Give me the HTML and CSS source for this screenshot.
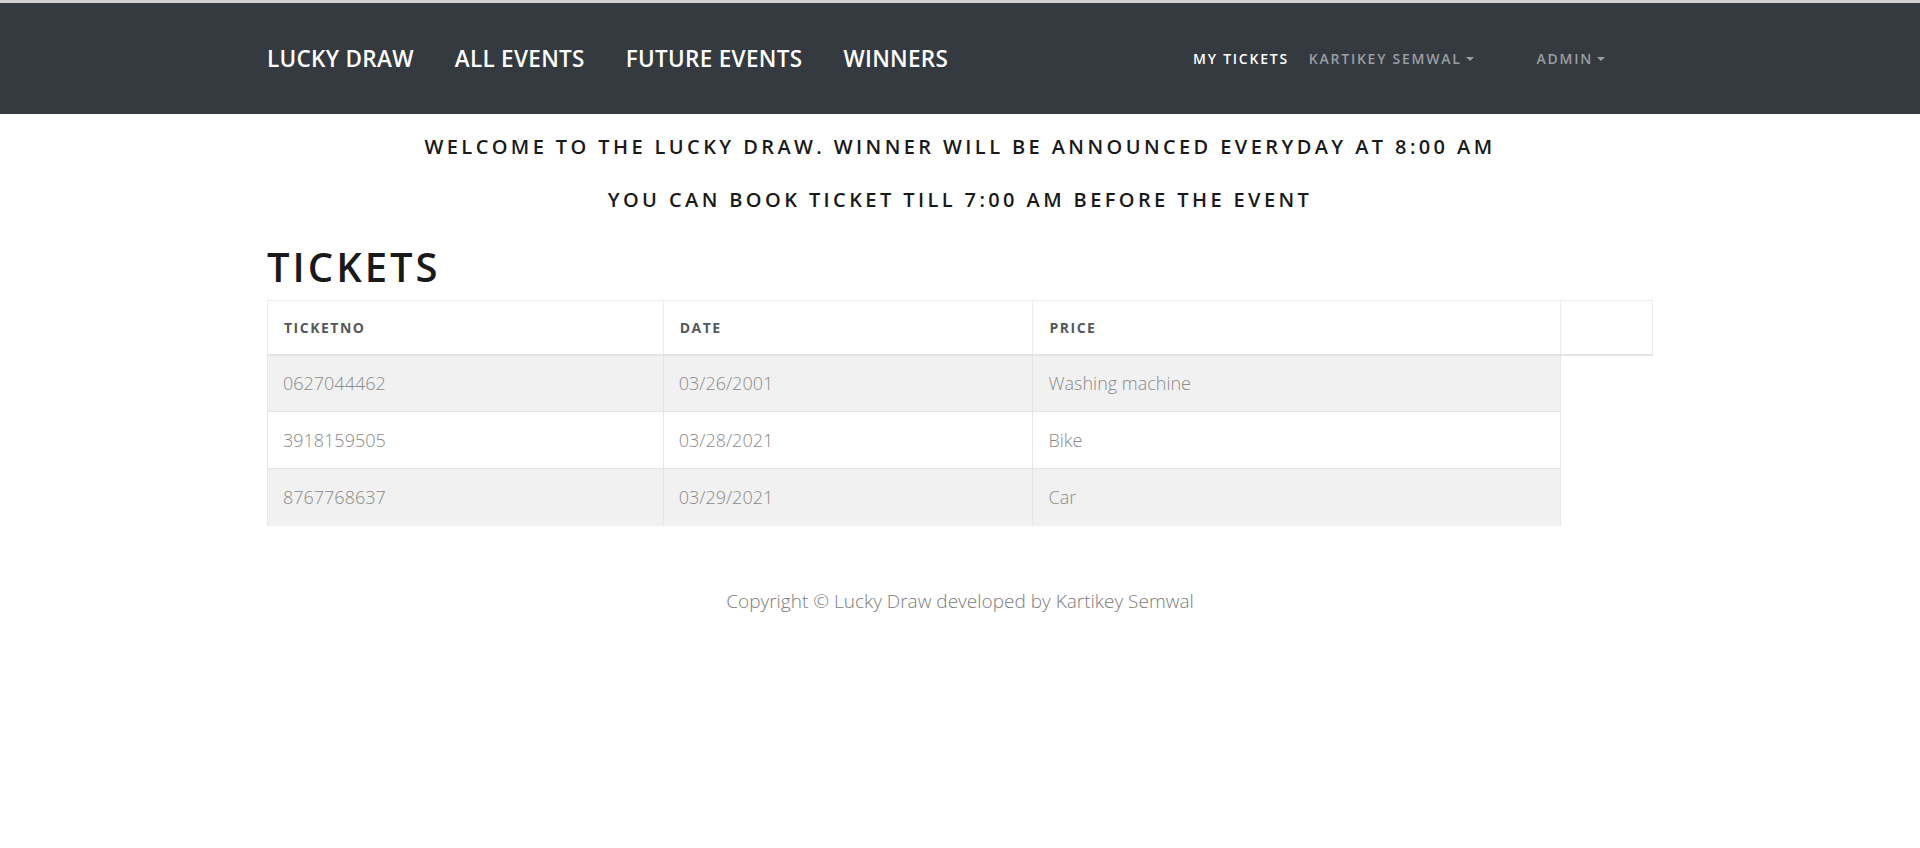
FILE: index.html
```html
<!DOCTYPE html>
<html>
<head>
<meta charset="utf-8">
<link rel="stylesheet" href="styles.css">
</head>
<body>
<div class="topline"></div>
<nav class="navbar">
  <div class="nav-inner">
    <ul class="nav-main">
      <li><a href="#">Lucky Draw</a></li>
      <li><a href="#">All Events</a></li>
      <li><a href="#">Future Events</a></li>
      <li><a href="#">Winners</a></li>
    </ul>
    <ul class="nav-right">
      <li class="active"><a href="#">My Tickets</a></li>
      <li class="user"><a href="#">Kartikey Semwal<span class="caret"></span></a></li>
      <li class="admin"><a href="#">Admin<span class="caret"></span></a></li>
    </ul>
  </div>
</nav>
<main class="container">
  <h5 class="notice first">Welcome to the lucky draw. Winner will be announced everyday at 8:00 AM</h5>
  <h5 class="notice">You can book ticket till 7:00 AM before the event</h5>
  <h1 class="title">Tickets</h1>
  <table class="tickets">
    <thead>
      <tr>
        <th class="c1">TicketNo</th>
        <th class="c2">Date</th>
        <th class="c3">Price</th>
        <th class="c4"></th>
      </tr>
    </thead>
    <tbody>
      <tr><td>0627044462</td><td>03/26/2001</td><td>Washing machine</td></tr>
      <tr><td>3918159505</td><td>03/28/2021</td><td>Bike</td></tr>
      <tr><td>8767768637</td><td>03/29/2021</td><td>Car</td></tr>
    </tbody>
  </table>
  <footer class="footer">Copyright © Lucky Draw developed by Kartikey Semwal</footer>
</main>
</body>
</html>
```
FILE: styles.css
```css
html, body {
  margin: 0;
  padding: 0;
  background: #fff;
}
body {
  font-family: "Open Sans", "Noto Sans", sans-serif;
  color: #1a1a1a;
}
.topline {
  height: 3px;
  background: #d3d3d3;
}
.navbar {
  background: #343a40;
  height: 111px;
  display: flex;
  align-items: center;
}
.nav-inner {
  width: 1386px;
  margin: 0 auto;
  display: flex;
  align-items: center;
  padding-right: 48px;
  box-sizing: border-box;
}
.nav-main, .nav-right {
  list-style: none;
  margin: 0;
  padding: 0;
  display: flex;
  align-items: center;
}
.nav-main {
  gap: 41px;
}
.nav-main a {
  color: #fff;
  text-decoration: none;
  text-transform: uppercase;
  font-weight: 600;
  font-size: 22.5px;
  letter-spacing: 0.3px;
}
.nav-right {
  margin-left: auto;
}
.nav-right a {
  color: #9a9ea2;
  text-decoration: none;
  text-transform: uppercase;
  font-weight: 600;
  font-size: 14px;
  letter-spacing: 1.75px;
  display: flex;
  align-items: center;
}
.nav-right .active a {
  color: #fff;
}
.nav-right .user {
  margin-left: 20px;
}
.nav-right .admin {
  margin-left: 63px;
}
.caret {
  display: inline-block;
  width: 0;
  height: 0;
  margin-left: 4px;
  border-left: 4.5px solid transparent;
  border-right: 4.5px solid transparent;
  border-top: 4.5px solid #9a9ea2;
}
.container {
  width: 1386px;
  margin: 0 auto;
}
.notice {
  margin: 0;
  text-align: center;
  text-transform: uppercase;
  font-weight: 600;
  font-size: 20px;
  line-height: 24px;
  letter-spacing: 3.4px;
  color: #1a1a1a;
}
.notice.first {
  margin-top: 21px;
  margin-bottom: 29px;
}
.title {
  margin: 30px 0 8px;
  font-size: 40px;
  line-height: 50px;
  font-weight: 600;
  text-transform: uppercase;
  letter-spacing: 3px;
  color: #1a1a1a;
}
.tickets {
  width: 100%;
  border-collapse: collapse;
  font-size: 16px;
}
.tickets th {
  text-align: left;
  text-transform: uppercase;
  font-size: 14px;
  font-weight: 700;
  letter-spacing: 1.5px;
  color: #55595c;
  height: 54px;
  padding: 0 16px;
  border: 1px solid #ececec;
  border-bottom: 2px solid #e4e4e4;
  box-sizing: border-box;
}
.tickets .c1 { width: 396px; }
.tickets .c2 { width: 370px; }
.tickets .c3 { width: 528px; }
.tickets .c4 { width: 92px; }
.tickets td {
  height: 57px;
  padding: 0 15px;
  color: #8a8a8a;
  font-weight: 300;
  font-size: 18px;
  border-left: 1px solid #e6e6e6;
  border-right: 1px solid #e6e6e6;
  border-top: 1px solid #e4e4e4;
  box-sizing: border-box;
}
.tickets tbody tr:nth-child(odd) td {
  background: #f1f1f1;
}
.footer {
  text-align: center;
  margin-top: 62px;
  font-size: 19px;
  font-weight: 300;
  color: #7c7c7c;
}
```
